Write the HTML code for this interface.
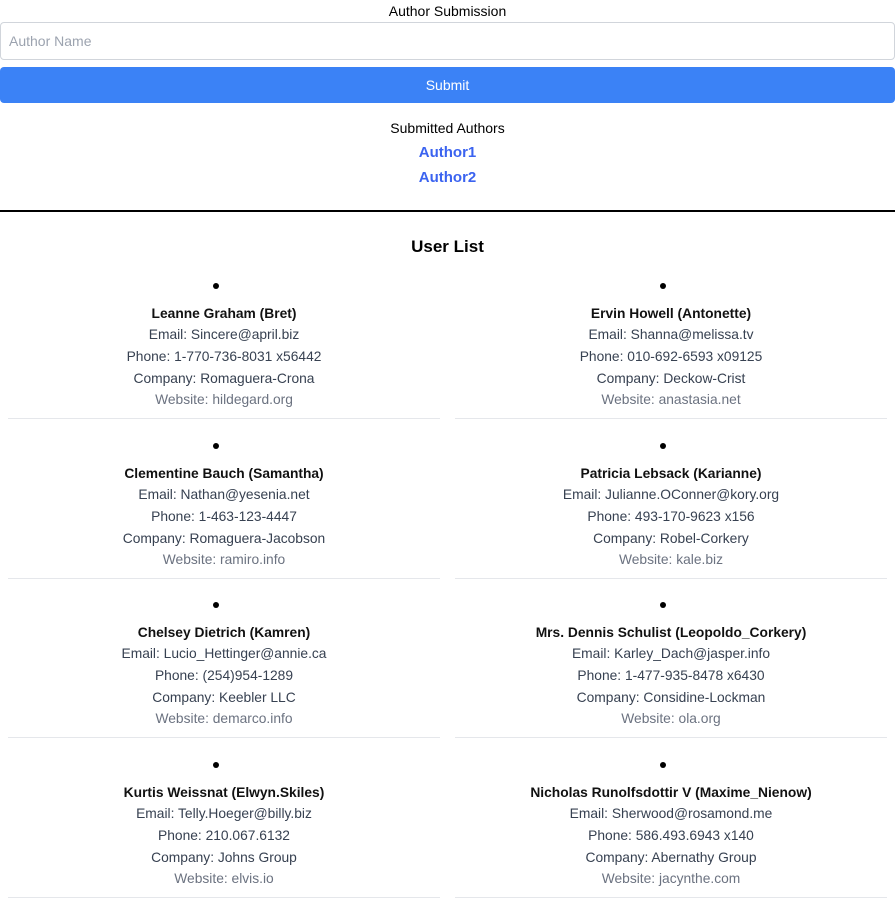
<!DOCTYPE html>
<html><head><meta charset="utf-8"><style>
*{margin:0;padding:0;box-sizing:border-box}
body{width:895px;height:909px;background:#fff;font-family:"Liberation Sans",Arial,sans-serif;position:relative;overflow:hidden;color:#000}
.abs{position:absolute}
.c{text-align:center}
.inp{left:0;top:22px;width:895px;height:38px;border:1px solid #d1d5db;border-radius:4px;font-size:14px;color:#9ca3af;padding:10px 8px}
.btn{left:0;top:67px;width:895px;height:36px;background:#3b82f6;border-radius:4px;color:#fff;font-size:14px;text-align:center;line-height:36px}
.card{position:absolute;width:432px;height:148px;border-bottom:1px solid #e5e7eb;text-align:center;font-size:13.8px}
.dot{position:absolute;left:205px;top:12px;width:6px;height:6px;border-radius:50%;background:#000}
.card .l{position:absolute;left:0;width:100%;line-height:20px}
</style></head><body>
<div class="abs c" style="left:0;top:2px;width:895px;font-size:14px;line-height:18px">Author Submission</div>
<div class="abs inp">Author Name</div>
<div class="abs btn">Submit</div>
<div class="abs c" style="left:0;top:119px;width:895px;font-size:14px;line-height:18px">Submitted Authors</div>
<div class="abs c" style="left:0;top:144px;width:895px;font-size:15px;font-weight:bold;color:#3b63f0;line-height:18px">Author1</div>
<div class="abs c" style="left:0;top:169px;width:895px;font-size:15px;font-weight:bold;color:#3b63f0;line-height:18px">Author2</div>
<div class="abs" style="left:0;top:210px;width:895px;height:2px;background:#000"></div>
<div class="abs c" style="left:0;top:236px;width:895px;font-size:17px;font-weight:bold;line-height:22px">User List</div>
<div id="cards"></div>
<script>
var u=[["Leanne Graham (Bret)","Sincere@april.biz","1-770-736-8031 x56442","Romaguera-Crona","hildegard.org"],
["Ervin Howell (Antonette)","Shanna@melissa.tv","010-692-6593 x09125","Deckow-Crist","anastasia.net"],
["Clementine Bauch (Samantha)","Nathan@yesenia.net","1-463-123-4447","Romaguera-Jacobson","ramiro.info"],
["Patricia Lebsack (Karianne)","Julianne.OConner@kory.org","493-170-9623 x156","Robel-Corkery","kale.biz"],
["Chelsey Dietrich (Kamren)","Lucio_Hettinger@annie.ca","(254)954-1289","Keebler LLC","demarco.info"],
["Mrs. Dennis Schulist (Leopoldo_Corkery)","Karley_Dach@jasper.info","1-477-935-8478 x6430","Considine-Lockman","ola.org"],
["Kurtis Weissnat (Elwyn.Skiles)","Telly.Hoeger@billy.biz","210.067.6132","Johns Group","elvis.io"],
["Nicholas Runolfsdottir V (Maxime_Nienow)","Sherwood@rosamond.me","586.493.6943 x140","Abernathy Group","jacynthe.com"]];
var h="";
u.forEach(function(d,i){var x=i%2?455:8,y=271+Math.floor(i/2)*159.5;
h+='<div class="card" style="left:'+x+'px;top:'+y+'px"><div class="dot"></div>'+
'<div class="l" style="top:33px;font-weight:bold;color:#111">'+d[0]+'</div>'+
'<div class="l" style="top:54px;color:#374151">Email: '+d[1]+'</div>'+
'<div class="l" style="top:76px;color:#374151">Phone: '+d[2]+'</div>'+
'<div class="l" style="top:98px;color:#374151">Company: '+d[3]+'</div>'+
'<div class="l" style="top:119px;color:#6b7280">Website: '+d[4]+'</div></div>';});
document.getElementById("cards").innerHTML=h;
</script>
</body></html>
